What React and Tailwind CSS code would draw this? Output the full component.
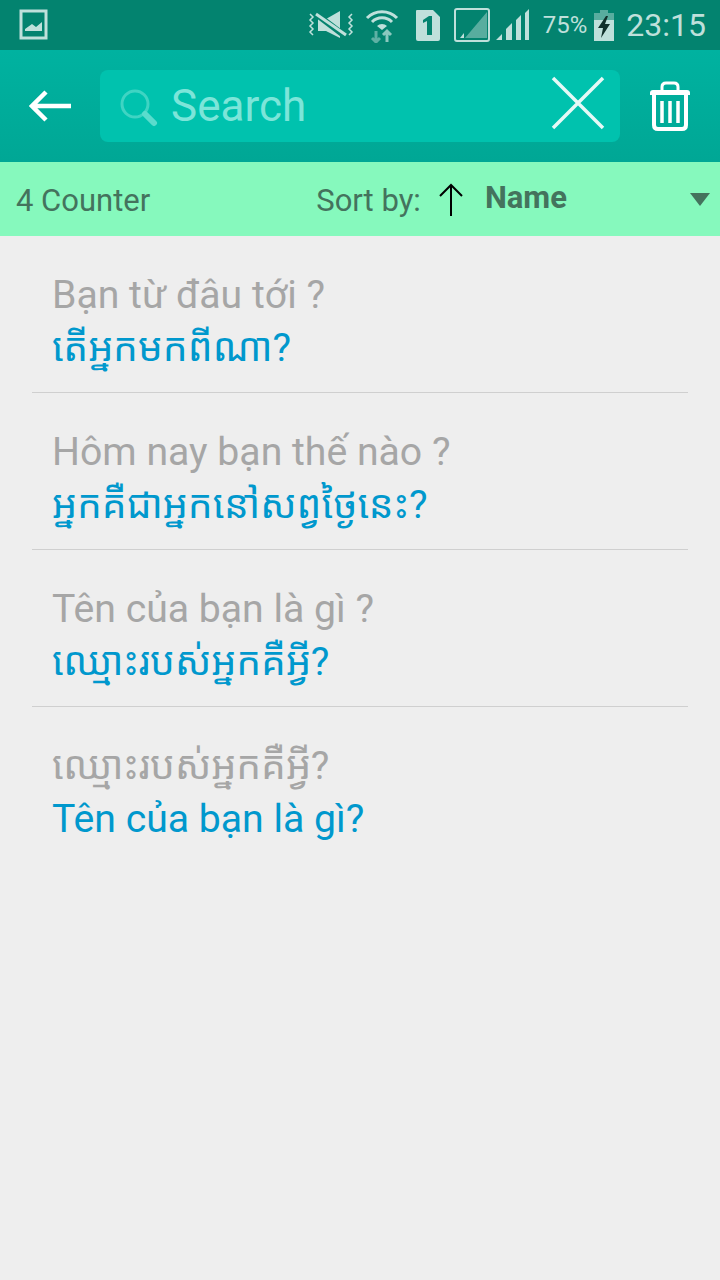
import React from 'react';

const items = [
  { source: 'Bạn từ đâu tới ?', target: 'តើអ្នកមកពីណា?' },
  { source: 'Hôm nay bạn thế nào ?', target: 'អ្នកគឺជាអ្នកនៅសព្វថ្ងៃនេះ?' },
  { source: 'Tên của bạn là gì ?', target: 'ឈ្មោះរបស់អ្នកគឺអ្វី?' },
  { source: 'ឈ្មោះរបស់អ្នកគឺអ្វី?', target: 'Tên của bạn là gì?' },
];

const StatusBar = () => (
  <div className="h-[50px] bg-[#03836f] flex items-center justify-between shrink-0 text-[#bfe0db]">
    <svg width="30" height="32" viewBox="0 0 30 32" className="ml-[19px]">
      <rect x="2" y="2" width="25" height="27" fill="none" stroke="#bfe0db" strokeWidth="3" />
      <path d="M6 22 L6 20 L13 15 L17 18 L23 13 L23 22 Z" fill="#bfe0db" />
    </svg>
    <div className="flex items-center mr-[14px]">
      {/* vibrate + mute */}
      <svg width="48" height="30" viewBox="0 0 48 30">
        <path d="M3 4 l3 3 -3 3 3 3 -3 3 3 3 -3 3 3 3" fill="none" stroke="#bfe0db" strokeWidth="1.5" />
        <path d="M45 4 l-3 3 3 3 -3 3 3 3 -3 3 3 3 -3 3" fill="none" stroke="#bfe0db" strokeWidth="1.5" />
        <path d="M11 9 H19 L33 1 V28 L19 21 H11 Z" fill="#bfe0db" />
        <path d="M9 4 L38 26" stroke="#03836f" strokeWidth="6" />
        <path d="M9 4 L39 25" stroke="#bfe0db" strokeWidth="3" />
      </svg>
      {/* wifi */}
      <svg width="34" height="36" viewBox="0 0 34 36" className="ml-[10px]">
        <path d="M2 11 A21 21 0 0 1 32 11" fill="none" stroke="#bfe0db" strokeWidth="3" />
        <path d="M7 15 A14 14 0 0 1 27 15" fill="none" stroke="#bfe0db" strokeWidth="3" />
        <path d="M12 19 A7 7 0 0 1 22 19 L17 23 Z" fill="#bfe0db" />
        <path d="M11 24 V35 M7 31 L11 35 L15 31" fill="none" stroke="#5fb0a4" strokeWidth="3" />
        <path d="M22 35 V24 M18 28 L22 24 L26 28" fill="none" stroke="#8cc8bf" strokeWidth="3" />
      </svg>
      {/* sim 1 */}
      <svg width="26" height="33" viewBox="0 0 26 33" className="ml-[16px]">
        <path d="M2 1 H18 L25 8 V30 Q25 32 23 32 H3 Q1 32 1 30 V2 Q1 1 2 1 Z" fill="#bfe0db" />
        <path d="M8 11 L14 7 H17 V26 H12 V12 L8 14 Z" fill="#03836f" />
      </svg>
      {/* signal sim 1 */}
      <svg width="36" height="34" viewBox="0 0 36 34" className="ml-[13px]">
        <rect x="1" y="1" width="34" height="32" rx="2" fill="none" stroke="#bfe0db" strokeWidth="2" />
        <path d="M11 30 L33 4 V30 Z" fill="#58ad9f" />
        <path d="M6 30 L10 25 V30 Z" fill="#bfe0db" />
      </svg>
      {/* signal sim 2 */}
      <svg width="34" height="32" viewBox="0 0 34 32" className="ml-[6px]">
        <path d="M0 31 L6 25 V31 Z M10 31 V20 L16 14 V31 Z M20 31 V11 L25 6 V31 Z M29 31 V4 L33 0 V31 Z" fill="#bfe0db" />
      </svg>
      <span className="ml-[13px] text-[24px] leading-none font-['Roboto',sans-serif]">75%</span>
      {/* battery */}
      <svg width="20" height="31" viewBox="0 0 20 31" className="ml-[7px]">
        <rect x="6" y="0" width="8" height="4" fill="#58ad9f" />
        <rect x="0" y="3" width="20" height="7" fill="#58ad9f" />
        <rect x="0" y="10" width="20" height="21" fill="#bfe0db" />
        <path d="M12 6 L4 18 H9 L7 28 L16 14 H11 L14 6 Z" fill="#11302b" />
      </svg>
      <span className="ml-[12px] text-[32px] leading-none font-['Roboto',sans-serif]">23:15</span>
    </div>
  </div>
);

const Toolbar = () => (
  <div className="h-[112px] bg-gradient-to-b from-[#00b2a0] to-[#00a795] flex items-center shrink-0">
    <button className="w-[100px] h-full flex items-center justify-center pl-[2px]">
      <svg width="44" height="32" viewBox="0 0 44 32">
        <path d="M42 16 H4 M17 2 L3 16 L17 30" fill="none" stroke="#ffffff" strokeWidth="4.5" />
      </svg>
    </button>
    <div className="w-[520px] h-[72px] rounded-[8px] bg-[#00c2ae] flex items-center relative">
      <svg width="40" height="40" viewBox="0 0 40 40" className="ml-[18px] mt-[2px]">
        <circle cx="17" cy="17" r="13" fill="none" stroke="#3fd4c3" strokeWidth="3" />
        <path d="M27 27 L36 36" stroke="#5adccd" strokeWidth="6" strokeLinecap="round" />
      </svg>
      <span className="ml-[13px] text-[44px] leading-none text-[#7ce5d9] font-['Roboto',sans-serif]">Search</span>
      <svg width="54" height="54" viewBox="0 0 54 54" className="absolute right-[15px] top-[6px]">
        <path d="M2 2 L52 52 M52 2 L2 52" stroke="#ffffff" strokeWidth="3.5" strokeOpacity="0.9" />
      </svg>
    </div>
    <button className="flex-1 h-full flex items-center justify-center">
      <svg width="42" height="50" viewBox="0 0 42 50">
        <path d="M1 12 Q1 9 4 9 H38 Q41 9 41 12 V14 H1 Z" fill="#ffffff" />
        <path d="M13 9 V6 Q13 2 17 2 H25 Q29 2 29 6 V9" fill="none" stroke="#ffffff" strokeWidth="3" />
        <path d="M5 14 V44 Q5 48 9 48 H33 Q37 48 37 44 V14" fill="none" stroke="#ffffff" strokeWidth="4" />
        <path d="M13 20 V42 M21 20 V42 M29 20 V42" stroke="#ffffff" strokeWidth="3.5" />
      </svg>
    </button>
  </div>
);

const SortBar = () => (
  <div className="h-[74px] bg-[#86f9bd] flex items-center shrink-0 text-[#44735d] font-['Roboto',sans-serif] relative">
    <span className="ml-[16px] mt-[2px] text-[31px] leading-none">4 Counter</span>
    <span className="ml-[166px] mt-[2px] text-[31px] leading-none">Sort by:</span>
    <svg width="24" height="34" viewBox="0 0 24 34" className="ml-[18px] mt-[2px]">
      <path d="M12 33 V2 M1 13 L12 2 L23 13" fill="none" stroke="#000000" strokeWidth="2" />
    </svg>
    <span className="ml-[22px] mb-[4px] text-[31px] leading-none font-bold">Name</span>
    <svg width="20" height="14" viewBox="0 0 20 14" className="absolute right-[10px] top-[31px]">
      <path d="M0 0 H20 L10 13 Z" fill="#44735d" />
    </svg>
  </div>
);

const Row = ({ source, target, last }) => (
  <div className={`h-[157px] mx-[32px] px-[20px] ${last ? '' : 'border-b-[1.5px] border-[#cfcfcf]'}`}>
    <div className="pt-[34px] text-[39.2px] leading-[50px] text-[#a6a6a6] whitespace-nowrap">{source}</div>
    <div className="mt-[3px] text-[39.2px] leading-[50px] text-[#0098cd] whitespace-nowrap">{target}</div>
  </div>
);

const App = () => (
  <div className="w-[720px] h-[1280px] flex flex-col bg-[#eeeeee] overflow-hidden font-['Roboto','Noto_Sans_Khmer','Noto_Sans',sans-serif]">
    <StatusBar />
    <Toolbar />
    <SortBar />
    <div className="flex-1">
      {items.map((item, i) => (
        <Row key={i} source={item.source} target={item.target} last={i === items.length - 1} />
      ))}
    </div>
  </div>
);

export default App;
